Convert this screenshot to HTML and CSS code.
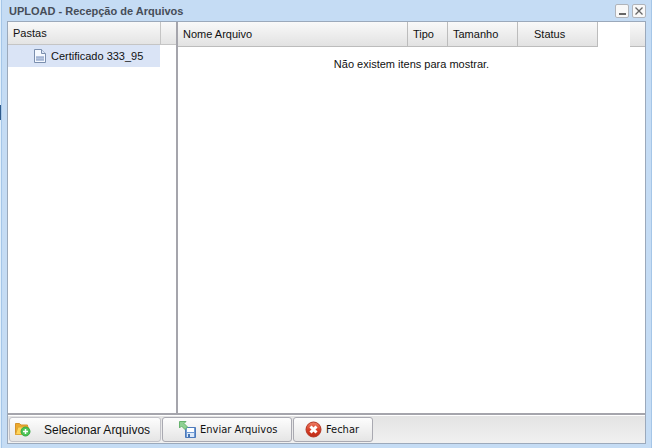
FILE: index.html
```html
<!DOCTYPE html>
<html lang="pt-BR">
<head>
<meta charset="utf-8">
<title>UPLOAD - Recepção de Arquivos</title>
<link rel="stylesheet" href="styles.css">
</head>
<body>
<section class="window">
  <header class="titlebar">
    <h1 class="title">UPLOAD - Recepção de Arquivos</h1>
    <button class="tool" type="button" aria-label="Minimizar">
      <svg width="12" height="12" viewBox="0 0 12 12"><path d="M3 9h7" stroke="#666" stroke-width="2"/></svg>
    </button>
    <button class="tool" type="button" aria-label="Fechar janela">
      <svg width="12" height="12" viewBox="0 0 12 12"><path d="M2.5 2.5l7 7M9.5 2.5l-7 7" stroke="#666" stroke-width="1.3"/></svg>
    </button>
  </header>
  <div class="content">
    <main class="panels">
      <nav class="folders" aria-label="Pastas">
        <div class="folders-head"><span class="folders-label">Pastas</span></div>
        <a class="folder" href="#certificado">
          <svg width="14" height="16" viewBox="0 0 14 16">
            <path d="M1.5 1.5h7l4 4v9h-11z" fill="#f5f9ff" stroke="#7b8fae"/>
            <path d="M8.5 1.5v4h4" fill="#dce7f6" stroke="#7b8fae"/>
            <path d="M3 8h8v5H3z" fill="#b4c3de"/>
            <path d="M3 9.5h8M3 11.5h8" stroke="#a3b5d3"/>
          </svg>
          <span>Certificado 333_95</span>
        </a>
      </nav>
      <section class="files">
        <table class="grid">
          <colgroup><col><col class="col-type"><col class="col-size"><col class="col-status"><col class="col-gap"><col class="col-end"></colgroup>
          <thead>
            <tr><th>Nome Arquivo</th><th>Tipo</th><th>Tamanho</th><th class="status">Status</th><td class="gap"></td><td class="end"></td></tr>
          </thead>
          <tbody>
            <tr><td class="empty" colspan="6">Não existem itens para mostrar.</td></tr>
          </tbody>
        </table>
      </section>
    </main>
    <footer class="toolbar">
      <button class="btn btn-select" type="button">
        <svg width="18" height="16" viewBox="0 0 18 16">
          <path d="M1.5 12.5v-11h4l1.5 1.5h6.5v9.5z" fill="#eda92c" stroke="#d4932a"/>
          <path d="M1.5 12.5l2.5-7.5h10.5l-2 7.5z" fill="#ffd65c" stroke="#e0a637"/>
          <circle cx="11.5" cy="9.5" r="4.5" fill="#4cc455" stroke="#36a743"/>
          <path d="M11.5 7v5M9 9.5h5" stroke="#fff" stroke-width="1.5"/>
        </svg>
        <span>Selecionar Arquivos</span>
      </button>
      <button class="btn btn-send" type="button">
        <svg width="17" height="17" viewBox="0 0 17 17">
          <path d="M6.5 6.5h10v10h-10z" fill="#6f9ad3" stroke="#4d7abb"/>
          <path d="M8 7h7v4H8z" fill="#fff"/>
          <path d="M8 12h7v4H8z" fill="#dce9f9"/>
          <path d="M9 13h2v3H9z" fill="#4775b3"/>
          <path d="M.5.5h6.5l-2 2 3.5 3.5-2.5 2.5L2.5 5l-2 2z" fill="#8fd193" stroke="#67b36e"/>
        </svg>
        <span>Enviar Arquivos</span>
      </button>
      <button class="btn btn-close" type="button">
        <svg width="17" height="17" viewBox="0 0 17 17">
          <defs><linearGradient id="red" x2="0" y2="1"><stop stop-color="#ef8068"/><stop offset=".55" stop-color="#d63c24"/><stop offset="1" stop-color="#bd2b17"/></linearGradient></defs>
          <circle cx="8.5" cy="8.5" r="7.5" fill="url(#red)" stroke="#b33826"/>
          <path d="M5.5 5.5l6 6M11.5 5.5l-6 6" stroke="#fff" stroke-width="3"/>
        </svg>
        <span>Fechar</span>
      </button>
    </footer>
  </div>
</section>
</body>
</html>
```
FILE: styles.css
```css
* { box-sizing: border-box; }
body {
  margin: 0;
  padding: 0 0 0 1px;
  background: linear-gradient(#e1effb 105px, #2d5a8c 105px, #2d5a8c 120px, #e1effb 120px);
  color: #111;
  font: 11px/14px "Liberation Sans", Arial, sans-serif;
}
.window {
  display: flex;
  flex-direction: column;
  min-height: 100vh;
  padding: 0 5px 4px;
  background: #c5dcf4;
  border: solid #a5c6e8;
  border-width: 0 1px;
}
.titlebar {
  display: flex;
  align-items: center;
  gap: 3px;
  height: 21px;
  padding: 0 0 0 2px;
}
.title {
  flex: 1;
  margin: 0;
  color: #464d58;
  font-size: 11px;
  line-height: 14px;
}
.tool {
  display: flex;
  width: 14px;
  height: 14px;
  padding: 0;
  background: #f8f8f8;
  border: 1px solid #b0b4ba;
  border-radius: 2px;
}
.content {
  flex: 1;
  display: flex;
  flex-direction: column;
  border: 1px solid #9ba9bb;
  background: #fff;
}
.panels {
  flex: 1;
  display: flex;
  border-bottom: 2px solid #a5a5ac;
}
.folders {
  width: 170px;
  border-right: 2px solid #a5a5ac;
}
.folders-head {
  height: 23px;
  padding-right: 15px;
  background: linear-gradient(#f9f9f9, #e4e4e4);
  border-bottom: 1px solid #c5c5c5;
}
.folders-label {
  display: block;
  padding: 4px 5px;
  border-right: 1px solid #c5c5c5;
}
.folder {
  display: flex;
  align-items: center;
  gap: 4px;
  height: 22px;
  margin-right: 16px;
  padding-left: 25px;
  background: #dae4f6;
  color: inherit;
  text-decoration: none;
}
.files { flex: 1; }
.grid {
  width: 100%;
  table-layout: fixed;
  border-collapse: separate;
  border-spacing: 0;
}
.col-type { width: 40px; }
.col-size { width: 70px; }
.col-status { width: 80px; }
.col-gap { width: 32px; }
.col-end { width: 15px; }
.grid th, .end {
  height: 25px;
  padding: 0 5px;
  background: linear-gradient(#f9f9f9, #e2e2e2);
  border-bottom: 1px solid #bcbcbc;
  font-weight: normal;
  text-align: left;
}
.grid th { border-right: 1px solid #bcbcbc; }
.grid .status { padding-left: 16px; }
.gap { padding: 0; }
.empty {
  padding: 10px 0 0;
  text-align: center;
}
.toolbar {
  display: flex;
  gap: 1px;
  padding: 1px;
  background: linear-gradient(#e3e3e3, #f1f1f1);
  border-top: 1px solid #fff;
}
.btn {
  display: flex;
  align-items: center;
  gap: 4px;
  height: 25px;
  padding: 0;
  background: linear-gradient(#fdfdfd, #e5e5e5);
  border: 1px solid #a9a9b1;
  border-radius: 3px;
  color: #111;
  font: 11px/14px "DejaVu Sans Condensed", "DejaVu Sans", sans-serif;
  white-space: nowrap;
}
.btn svg { flex: none; }
.btn-select {
  gap: 12px;
  width: 152px;
  padding-left: 4px;
  border-color: #c2c2c8;
  font: 12px/14px "Liberation Sans", Arial, sans-serif;
}
.btn-send {
  width: 130px;
  padding-left: 16px;
}
.btn-close {
  width: 80px;
  padding-left: 11px;
}
```
